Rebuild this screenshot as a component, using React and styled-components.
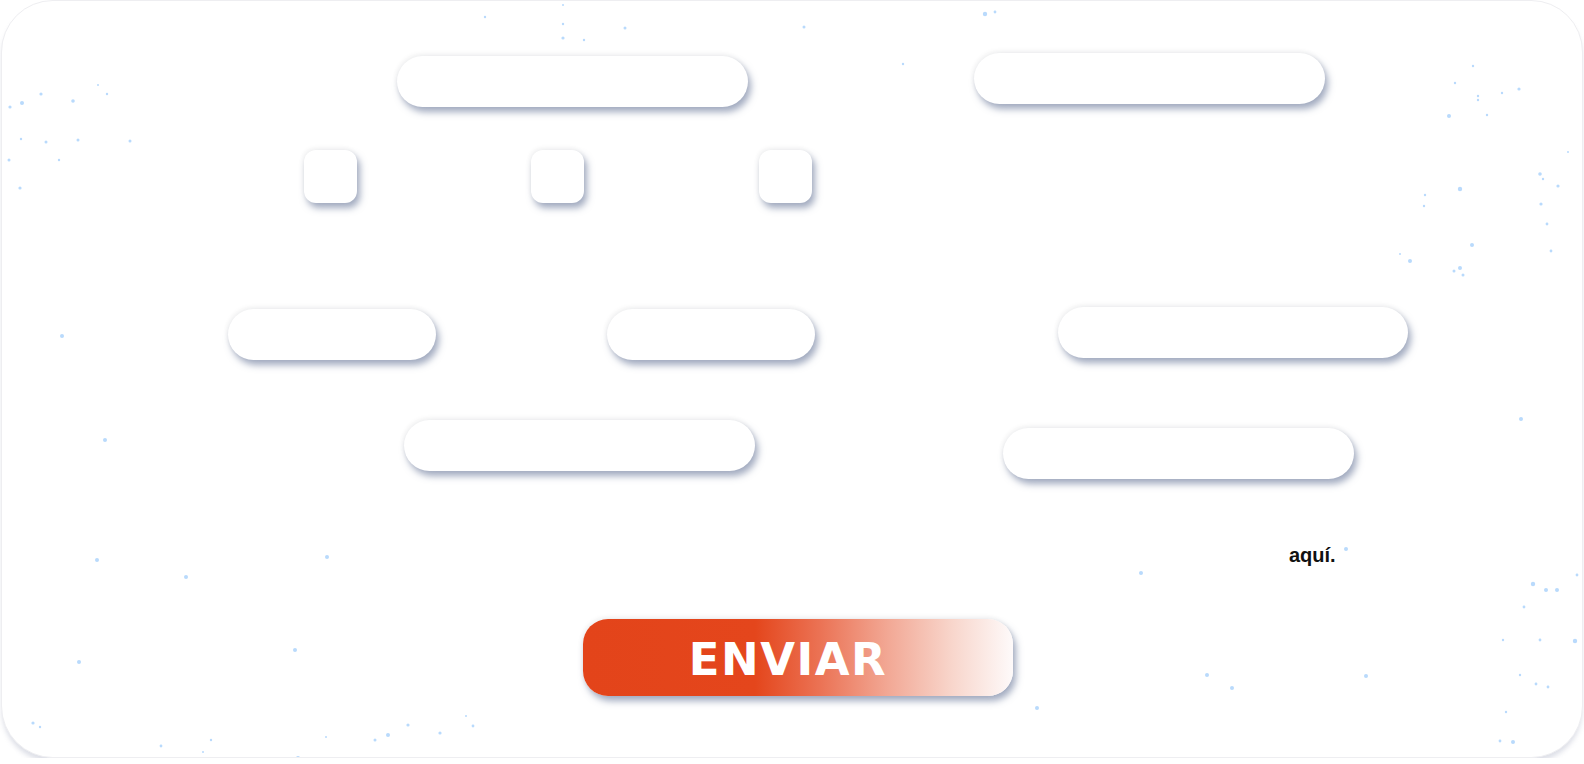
import React from "react";
import styled, { createGlobalStyle } from "styled-components";

const GlobalStyle = createGlobalStyle`
  html, body {
    margin: 0;
    padding: 0;
    background: #ffffff;
    font-family: "Liberation Sans", Arial, sans-serif;
  }
`;

// decorative particles, page coords (x, y, r)
const dots = [
  [485, 17, 1.2], [563, 5, 1], [563, 24, 1.2], [625, 28, 1.5], [563, 38, 1.6], [584, 40, 1.2],
  [804, 27, 1.5], [985, 14, 2.2], [995, 12, 1.4], [903, 64, 1.2],
  [10, 107, 1.6], [22, 103, 2], [41, 94, 1.6], [73, 101, 1.8], [98, 85, 1], [107, 94, 1.2],
  [21, 139, 1.2], [46, 142, 1.5], [59, 160, 1.2], [78, 140, 1.5], [130, 141, 1.5], [9, 160, 1.5],
  [20, 188, 1.6], [62, 336, 2], [105, 440, 2], [97, 560, 2], [186, 577, 2], [327, 557, 2],
  [295, 650, 2], [79, 662, 2], [33, 723, 1.6], [40, 727, 1.2], [161, 746, 1.4], [203, 752, 1],
  [211, 740, 1.2], [298, 758, 2], [326, 737, 1], [375, 740, 1.5], [388, 735, 2], [408, 725, 1.6],
  [440, 733, 1.6], [466, 716, 1], [473, 726, 1.4],
  [1455, 83, 1.2], [1473, 66, 1.2], [1478, 96, 1.2], [1478, 100, 1.2], [1487, 115, 1.2],
  [1502, 93, 1.2], [1519, 89, 1.6], [1449, 116, 2], [1460, 189, 2.2], [1425, 195, 1.2],
  [1424, 206, 1.2], [1472, 245, 2], [1540, 174, 1.8], [1543, 179, 1.2], [1558, 186, 1.6],
  [1541, 204, 1.6], [1547, 224, 1.4], [1568, 152, 1], [1551, 251, 1.4], [1410, 261, 2],
  [1400, 254, 1], [1460, 268, 2], [1454, 271, 1.5], [1463, 275, 1.5], [1521, 419, 2],
  [1346, 549, 2], [1141, 573, 2], [1207, 675, 2], [1232, 688, 2], [1366, 676, 2], [1037, 708, 2],
  [1533, 584, 2.2], [1546, 590, 2], [1557, 590, 2], [1577, 575, 1.4], [1524, 607, 1.4],
  [1503, 640, 1.2], [1540, 640, 1.4], [1575, 641, 2.2], [1520, 675, 1.2], [1536, 684, 1.4],
  [1548, 687, 1.4], [1506, 712, 1.2], [1500, 741, 1.4], [1513, 742, 2],
];

const Card = styled.div`
  position: relative;
  box-sizing: border-box;
  margin: 0 1px;
  height: 758px;
  border: 1px solid #eeeef1;
  border-radius: 52px;
  background: #ffffff;
  box-shadow: 0 5px 5px -1px rgba(150, 156, 180, 0.32);
  overflow: hidden;
`;

const Particles = styled.svg`
  position: absolute;
  left: -2px;
  top: -1px;
  width: 1584px;
  height: 764px;
  pointer-events: none;
`;

const Form = styled.form`
  position: relative;
  display: flex;
  flex-direction: column;
  margin: 0;
`;

const Row = styled.div`
  display: flex;
  align-items: flex-start;
  margin-top: ${(p) => p.$mt}px;
`;

const shadow = `
  3px 5px 7px rgba(70, 88, 130, 0.5),
  -1px -2px 5px rgba(0, 0, 0, 0.05)
`;

const Input = styled.input`
  box-sizing: border-box;
  width: ${(p) => p.$w}px;
  height: 51px;
  margin-left: ${(p) => p.$ml}px;
  margin-top: ${(p) => p.$mt || 0}px;
  padding: 0 22px;
  border: none;
  border-radius: 26px;
  background: #ffffff;
  box-shadow: ${shadow};
  font-family: "Liberation Sans", Arial, sans-serif;
  font-size: 16px;
  outline: none;
`;

const Check = styled.label`
  display: block;
  box-sizing: border-box;
  width: 53px;
  height: 53px;
  margin-left: ${(p) => p.$ml}px;
  border-radius: 12px;
  background: #ffffff;
  box-shadow: ${shadow};
`;

const Consent = styled.p`
  margin: 0 0 0 ${(p) => p.$ml}px;
  font-family: "Liberation Sans", Arial, sans-serif;
  font-weight: 700;
  font-size: 20px;
  line-height: 22px;
  color: #ffffff;
  white-space: nowrap;

  a {
    color: #111111;
    text-decoration: none;
  }
`;

const Submit = styled.button`
  box-sizing: border-box;
  width: 430px;
  height: 77px;
  margin-left: ${(p) => p.$ml}px;
  padding: 4px 20px 0 0;
  border: none;
  border-radius: 25px;
  background: linear-gradient(
    90deg,
    #e3441a 0%,
    #e4461c 40%,
    #eb7254 55%,
    #f2a895 71%,
    #f8d6cc 86%,
    #fefafa 100%
  );
  box-shadow: ${shadow};
  color: #ffffff;
  font-family: "DejaVu Sans", "Liberation Sans", sans-serif;
  font-weight: 700;
  font-size: 45px;
  letter-spacing: 1.5px;
  cursor: pointer;
`;

export default function App() {
  return (
    <>
      <GlobalStyle />
      <Card>
        <Particles viewBox="0 0 1584 764">
          {dots.map(([x, y, r], i) => (
            <circle key={i} cx={x} cy={y} r={r} fill="#b9dafc" />
          ))}
        </Particles>
        <Form onSubmit={(e) => e.preventDefault()}>
          <Row $mt={52}>
            <Input $w={351} $ml={395} $mt={3} />
            <Input $w={351} $ml={226} />
          </Row>
          <Row $mt={43}>
            <Check $ml={302} />
            <Check $ml={174} />
            <Check $ml={175} />
          </Row>
          <Row $mt={104}>
            <Input $w={208} $ml={226} $mt={2} />
            <Input $w={208} $ml={171} $mt={2} />
            <Input $w={350} $ml={243} />
          </Row>
          <Row $mt={60}>
            <Input $w={351} $ml={402} />
            <Input $w={351} $ml={248} $mt={8} />
          </Row>
          <Row $mt={65}>
            <Consent $ml={1287}>
              <a href="#privacidad">aquí.</a>
            </Consent>
          </Row>
          <Row $mt={53}>
            <Submit type="submit" $ml={581}>ENVIAR</Submit>
          </Row>
        </Form>
      </Card>
    </>
  );
}
